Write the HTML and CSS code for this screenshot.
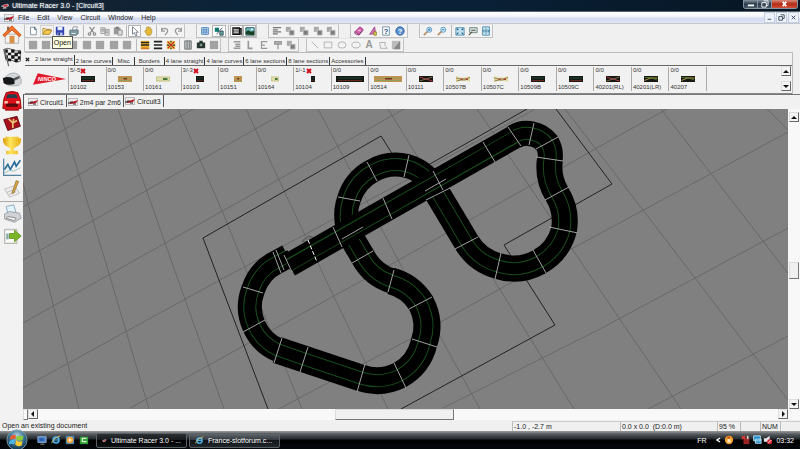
FILE: index.html
```html
<!DOCTYPE html>
<html lang="en">
<head>
<meta charset="utf-8">
<title>Ultimate Racer 3.0 - [Circuit3]</title>
<link rel="stylesheet" href="styles.css">
</head>
<body>
<svg class="defs" aria-hidden="true">
  <defs>
    <linearGradient id="gold" x1="0" x2="1"><stop offset="0" stop-color="#d99a05"/><stop offset=".4" stop-color="#ffe65c"/><stop offset="1" stop-color="#e5ac10"/></linearGradient>
    <radialGradient id="orb" cx=".5" cy=".3" r=".75"><stop offset="0" stop-color="#b8d5e4"/><stop offset=".5" stop-color="#37718f"/><stop offset="1" stop-color="#08243c"/></radialGradient>
    <symbol id="i-app" viewBox="0 0 12 10"><path d="M0 5l4-2 5-1 2 2-3 4-5 1z" fill="#b9a9ad"/><path d="M3 4l5-1 1 2-5 1z" fill="#d32634"/><path d="M1 7h2m4 0h2" stroke="#222" stroke-width="2"/></symbol>
    <symbol id="i-doc" viewBox="0 0 10 8"><rect x=".5" y=".5" width="9" height="7" fill="#eee" stroke="#bbb"/><path d="M1 5l3-1 6-2-2 3-5 1z" fill="#c01525"/><path d="M0 5h3m2 1h3M2 4h3" stroke="#222" stroke-width="1"/></symbol>
    <symbol id="i-new" viewBox="0 0 12 12"><path d="M3 1.500h5l2 2v7H3z" fill="#fff" stroke="#758a9c"/><path d="M8 1v3h2" fill="none" stroke="#345"/></symbol>
    <symbol id="i-open" viewBox="0 0 12 12"><path d="M1 10V3h3l1 1h5v2" fill="#ffe58c" stroke="#a7852d"/><path d="M1 10l3-5h8l-3 5z" fill="#f6cb50" stroke="#a67b25"/></symbol>
    <symbol id="i-save" viewBox="0 0 12 12"><path d="M1 1h10v10H2L1 10z" fill="#3444b0"/><path d="M3 1h6v4H3z" fill="#e5efff"/><path d="M3 8h6v3H3z" fill="#bcc5e5"/><path d="M4 8h2v3H4z" fill="#27348b"/></symbol>
    <symbol id="i-print" viewBox="0 0 12 12"><path d="M4 5l1-4h5L9 5z" fill="#fff" stroke="#889"/><path d="M1 5h10v4l-2 2H1z" fill="#829ba2" stroke="#506d79"/><path d="M3 9h5" stroke="#e4f4e9"/></symbol>
    <symbol id="i-cut" viewBox="0 0 12 12"><g fill="none" stroke="#858585" stroke-width="1.300"><path d="M3 1l5 7M9 1L4 8"/><circle cx="3" cy="9.500" r="1.500"/><circle cx="9" cy="9.500" r="1.500"/></g></symbol>
    <symbol id="i-copy" viewBox="0 0 12 12"><path d="M1 2h5v7H1zM6 4h5v7H6z" fill="#ddd" stroke="#999"/><path d="M2 4h3M2 6h3m2 0h3M7 8h3" stroke="#888"/></symbol>
    <symbol id="i-paste" viewBox="0 0 12 12"><path d="M1 2h8v8H1z" fill="#999"/><path d="M3 1h4v2H3z" fill="#777"/><path d="M6 5h5v6H6z" fill="#ddd" stroke="#888"/></symbol>
    <symbol id="i-pointer" viewBox="0 0 12 12"><path d="M3 1v9l2-2 2 4 1.500-1L7 7.500h3z" fill="#fff" stroke="#66717d"/></symbol>
    <symbol id="i-hand" viewBox="0 0 12 12"><path d="M2 6l1-1 1 1V2h1.500V1H7v1h2v2h1.500v4L9 11H5z" fill="#e5ba37" stroke="#a88428" stroke-width=".700"/></symbol>
    <symbol id="i-undo" viewBox="0 0 12 12"><path d="M2 5c3-4 8-2 7 2-1 2-2 3-3 4M2 2v4h4" fill="none" stroke="#999" stroke-width="1.500"/></symbol>
    <symbol id="i-redo" viewBox="0 0 12 12"><path d="M10 5C7 1 2 3 3 7c1 2 2 3 3 4M10 2v4H6" fill="none" stroke="#999" stroke-width="1.500"/></symbol>
    <symbol id="i-grid" viewBox="0 0 12 12"><path d="M2 2h8v8H2zM2 4.700h8M2 7.300h8M4.700 2v8M7.300 2v8" fill="#e8f4ff" stroke="#3b77b4"/></symbol>
    <symbol id="i-snap" viewBox="0 0 12 12"><path d="M1 2h5v5H1z" fill="#10776e"/><path d="M3 10l7-8M7 6h4v5H7z" fill="#62a79c" stroke="#345"/></symbol>
    <symbol id="i-layers" viewBox="0 0 12 12"><path d="M1 2h8v8H1zM3 3h8v8" fill="#555" stroke="#111" stroke-width="1.300"/><path d="M2 4h6M2 6h6M2 8h6" stroke="#ddd"/></symbol>
    <symbol id="i-image" viewBox="0 0 12 12"><path d="M1 2h10v9H1z" fill="#69b3bd" stroke="#164a52"/><path d="M1 10V7l3-2 3 2 4-1v5z" fill="#183d20"/><path d="M7 3h3v2H7z" fill="#dcf5f2"/></symbol>
    <symbol id="i-lines" viewBox="0 0 12 12"><path d="M1 2h10M1 4.500h6M1 7h10M1 9.500h6" stroke="#777" stroke-width="1.500"/></symbol>
    <symbol id="i-order" viewBox="0 0 12 12"><path d="M1 1h6v6H1z" fill="#aaa"/><path d="M5 5h6v6H5z" fill="#7c7c7c" stroke="#ccc"/></symbol>
    <symbol id="i-book" viewBox="0 0 12 12"><path d="M1 7l6-6 4 3-5 6z" fill="#d763ae" stroke="#94327c"/><path d="M1 7v2l5 2 5-6" fill="none" stroke="#762866"/><path d="M5 5l3 1" stroke="#fff"/></symbol>
    <symbol id="i-picture" viewBox="0 0 12 12"><path d="M2 10l6-9 1 8z" fill="#d96eb1" stroke="#94458a"/><path d="M7 7h3v4H7z" fill="#ded450" stroke="#8d7a28"/></symbol>
    <symbol id="i-question" viewBox="0 0 12 12"><path d="M2 1h8v10H2z" fill="#fff" stroke="#65859e"/><text x="6" y="9" class="mark blue">?</text></symbol>
    <symbol id="i-help" viewBox="0 0 12 12"><circle cx="6" cy="6" r="5" fill="#5791d2" stroke="#285394"/><text x="6" y="9" class="mark white">?</text></symbol>
    <symbol id="i-zoomin" viewBox="0 0 12 12"><path d="M1 11l5-5" stroke="#b78a61" stroke-width="2"/><circle cx="7.500" cy="4.500" r="3" fill="#d5efff" stroke="#4a8cb5"/><path d="M6 4.500h3M7.500 3v3" stroke="#176a9e"/></symbol>
    <symbol id="i-zoomout" viewBox="0 0 12 12"><path d="M1 11l5-5" stroke="#b78a61" stroke-width="2"/><circle cx="7.500" cy="4.500" r="3" fill="#d5efff" stroke="#4a8cb5"/><path d="M6 4.500h3" stroke="#176a9e"/></symbol>
    <symbol id="i-fit" viewBox="0 0 12 12"><path d="M1 2h10v9H1z" fill="#c4e2ef" stroke="#508da9"/><path d="M2 3l2 2m6-2L8 5M2 10l2-2m6 2L8 8" stroke="#1b648c" stroke-width="1.500"/></symbol>
    <symbol id="i-zoomsel" viewBox="0 0 12 12"><path d="M2 2h9v6H2z" fill="#d1dedc" stroke="#637a7d"/><path d="M1 11l4-4M4 5h5" stroke="#625644" stroke-width="1.300"/></symbol>
    <symbol id="i-page" viewBox="0 0 12 12"><path d="M2 1h8v10H2z" fill="#d5eef8" stroke="#397b9e"/><path d="M6 2v8M3 6h7M4 4L2 6l2 2m4-4l2 2-2 2" fill="none" stroke="#397b9e"/></symbol>
    <symbol id="i-square" viewBox="0 0 12 12"><path d="M1 1h10v10H1z" fill="#a2a2a2"/></symbol>
    <symbol id="i-border1" viewBox="0 0 12 12"><path d="M1 1h10v10H1z" fill="#efb62a"/><path d="M1 2h10v2H1zM1 5h10v2H1z" fill="#29251f"/><path d="M1 9h10v2H1z" fill="#cb7725"/></symbol>
    <symbol id="i-border2" viewBox="0 0 12 12"><path d="M1 1h10v2H1zM1 5h10v2H1zM1 9h10v2H1z" fill="#222"/></symbol>
    <symbol id="i-border3" viewBox="0 0 12 12"><path d="M1 1h10v10H1z" fill="#f1ce5f"/><path d="M2 2l8 8m0-8l-8 8" stroke="#bc2315" stroke-width="1.500"/><path d="M1 6h3m4 0h3M6 1v2m0 6v2" stroke="#332" stroke-width="1.500"/></symbol>
    <symbol id="i-cols" viewBox="0 0 12 12"><path d="M2 1h8v10H2zM5 1v10M8 1v10" fill="#bbb" stroke="#6e7476"/></symbol>
    <symbol id="i-camera" viewBox="0 0 12 12"><path d="M1 3h3V1h4v2h3v7H1z" fill="#273b32"/><circle cx="6" cy="6" r="2.500" fill="#7a9b8b" stroke="#111"/></symbol>
    <symbol id="i-al1" viewBox="0 0 12 12"><path d="M2 2h8M4 5h6M4 7.500h6M2 10h8" stroke="#999" stroke-width="1.800"/></symbol>
    <symbol id="i-al2" viewBox="0 0 12 12"><path d="M4 1v9h5" fill="none" stroke="#999" stroke-width="2"/></symbol>
    <symbol id="i-al3" viewBox="0 0 12 12"><path d="M10 2H3v8h7M3 6h4" fill="none" stroke="#999" stroke-width="1.500"/></symbol>
    <symbol id="i-al4" viewBox="0 0 12 12"><path d="M2 2h8v3H2zM6 3v8" fill="#bbb" stroke="#999" stroke-width="1.500"/></symbol>
    <symbol id="i-line" viewBox="0 0 12 12"><path d="M2 2l8 8" stroke="#aaa"/></symbol>
    <symbol id="i-rect" viewBox="0 0 12 12"><path d="M1.500 2.500h9v7h-9z" fill="none" stroke="#aaa"/></symbol>
    <symbol id="i-round" viewBox="0 0 12 12"><rect x="1.500" y="2.500" width="9" height="7" rx="3" fill="none" stroke="#aaa"/></symbol>
    <symbol id="i-ellipse" viewBox="0 0 12 12"><ellipse cx="6" cy="6" rx="5" ry="3.500" fill="none" stroke="#aaa"/></symbol>
    <symbol id="i-letter" viewBox="0 0 12 12"><text x="6" y="10" class="mark letter">A</text></symbol>
    <symbol id="i-poly" viewBox="0 0 12 12"><path d="M2 3h7L8 6l3 4H3z" fill="none" stroke="#aaa"/></symbol>
    <symbol id="i-shade" viewBox="0 0 12 12"><path d="M1 1h10v10H1z" fill="#bbb"/><path d="M11 1v10H3z" fill="#888"/></symbol>
    <symbol id="i-bad" viewBox="0 0 6 6"><path d="M1 1l4 4M5 1L1 5" stroke="#d0101c" stroke-width="2"/></symbol>
    <symbol id="i-dark" viewBox="0 0 28 12" preserveAspectRatio="none"><path d="M0 0h28v12H0z" fill="#151815"/><path d="M2 4h24" stroke="#1d4a2c" stroke-width="2"/><path d="M2 9h24" stroke="#6b281c" stroke-width="2"/></symbol>
    <symbol id="i-cross" viewBox="0 0 28 12" preserveAspectRatio="none"><path d="M0 0h28v12H0z" fill="#15160f"/><path d="M1 2l26 8" stroke="#b23a4a" stroke-width="2"/><path d="M1 10l26-8" stroke="#7a6a46" stroke-width="2"/></symbol>
    <symbol id="i-change" viewBox="0 0 28 12" preserveAspectRatio="none"><path d="M0 0h28v12H0z" fill="#171813"/><path d="M1 9l12-5h14" fill="none" stroke="#b69a3d" stroke-width="2"/><path d="M1 3h13l12 5" fill="none" stroke="#598a3c" stroke-width="1.500"/></symbol>
    <symbol id="i-sand" viewBox="0 0 28 12" preserveAspectRatio="none"><path d="M0 0h28v12H0z" fill="#c89052"/><path d="M1 3l6 2 8-2 12 2M1 9h26" fill="none" stroke="#8fa058" stroke-width="2"/><path d="M11 4h7v3h-7z" fill="#753524"/></symbol>
    <symbol id="i-light" viewBox="0 0 28 12" preserveAspectRatio="none"><path d="M0 1h28v10H0z" fill="#e0dda8"/><path d="M1 2h26v8H1z" fill="none" stroke="#a4aa68"/><path d="M14 4h9v4h-9z" fill="#467540"/></symbol>
    <symbol id="i-narrow" viewBox="0 0 28 12" preserveAspectRatio="none"><path d="M0 0l9 3h10l9-3v12l-9-3H9l-9 3z" fill="#e2dba4"/><path d="M0 4l9 2h10l9-3M1 10l9-2h9" fill="none" stroke="#93834b" stroke-width="2"/><path d="M9 5h4v3H9zM19 5h5v3h-5z" fill="#a5443a"/></symbol>
    <symbol id="s-home" viewBox="0 0 24 24"><path d="M4 11h16v11H4z" fill="#f4f1eb" stroke="#aaa"/><path d="M1 12L12 1l11 11-2 2-9-8-9 8z" fill="#f47427" stroke="#c34b13"/><path d="M6 2h3v5H6z" fill="#aa6340"/><path d="M9 13h6v9H9z" fill="#d89148"/></symbol>
    <symbol id="s-flag" viewBox="0 0 24 24"><path d="M2 3q5-3 10 0t10 1v13q-5 3-10-1T5 16z" fill="#eee" stroke="#444"/><path d="M3 3h4v4H3zm8 0h4v4h-4zm8 2h4v3h-4zM7 7h4v3H7zm8 0h4v4h-4zM4 10h3v4H4zm7 0h4v4h-4zm8 1h3v4h-3zM7 14h4v3H7zm8 0h4v4h-4z" fill="#151515"/><path d="M3 3l5 20" stroke="#666" stroke-width="1.500"/></symbol>
    <symbol id="s-helmet" viewBox="0 0 24 24"><path d="M4 10Q8 4 16 5q8 2 7 12l-3 3H8q-5-2-4-10z" fill="#d3d6d8" stroke="#a5aaac"/><path d="M1 11q7-3 14 1v6q-8 2-13-1z" fill="#15191b"/><path d="M14 11l7-3v3l-6 3z" fill="#555"/></symbol>
    <symbol id="s-car" viewBox="0 0 24 24"><path d="M5 2q7-3 14 0l3 8 1 11h-3v2H4v-2H1l1-11z" fill="#e0101a" stroke="#8d050a"/><path d="M5 9l2-5h10l2 5q-7-2-14 0z" fill="#243e4b"/><path d="M5 15h14v4H5z" fill="#510d10"/><path d="M3 12h4v3H3zm14 0h4v3h-4z" fill="#fac5b5"/></symbol>
    <symbol id="s-tools" viewBox="0 0 24 24"><path d="M2 8l16-4 4 12-15 5z" fill="#a8101c" stroke="#580811"/><path d="M8 7l5 5 1-5m-1 5l5-3m-5 3v6" fill="none" stroke="#e6c171" stroke-width="2"/></symbol>
    <symbol id="s-cup" viewBox="0 0 24 24"><path d="M4 2h16v2h3q0 9-6 10-2 2-3 2v3h5v4H5v-4h5v-3q-1 0-3-2-6-1-6-10h3z" fill="url(#gold)"/></symbol>
    <symbol id="s-chart" viewBox="0 0 24 24"><path d="M2 2v20h21" fill="none" stroke="#5280a2" stroke-width="1.500"/><path d="M3 15l4-6 3 6 5-9 2 5 5-7" fill="none" stroke="#296c9a" stroke-width="2"/><path d="M3 19l6-3 5 1 8-4" fill="none" stroke="#8ab9b6"/></symbol>
    <symbol id="s-pen" viewBox="0 0 24 24"><path d="M3 12l12-4 6 9-12 5z" fill="#ecece8" stroke="#bbb"/><path d="M6 16l10-4m-8 7l9-4" stroke="#b5b5b5"/><path d="M12 17l5-15 3 1-6 14z" fill="#dba645" stroke="#9c7a37"/></symbol>
    <symbol id="s-print" viewBox="0 0 24 24"><path d="M7 11L5 3l9-2 3 10z" fill="#e4f4ff" stroke="#7e9fb4"/><path d="M3 12l6-3 12 2 2 6-8 5-12-4z" fill="#d0d3d6" stroke="#93989d"/><path d="M7 15l10 2-2 3-10-3z" fill="#fff" stroke="#777"/></symbol>
    <symbol id="s-exit" viewBox="0 0 24 24"><path d="M3 4h15v17H3z" fill="#e4e7df" stroke="#abb1a8"/><path d="M5 6h11v13H5z" fill="#fff"/><path d="M5 9h3v7H5z" fill="#8aa"/><path d="M9 9h6V5l8 7-8 7v-4H9z" fill="#79b526" stroke="#62951e"/></symbol>
    <symbol id="i-orb" viewBox="0 0 24 24"><circle cx="12" cy="12" r="11" fill="url(#orb)" stroke="#819eac"/><path d="M5 8q3-2 6-1l-1 4q-3-1-6 1z" fill="#f1592a"/><path d="M12 7q3 2 7 0l-1 5q-4 2-7-1z" fill="#8fcb35"/><path d="M4 13q3-2 6-1l-1 5q-3-2-6 0z" fill="#4db6e9"/><path d="M11 12q3 3 7 1l-1 5q-4 2-7-1z" fill="#fcca31"/></symbol>
    <symbol id="i-desk" viewBox="0 0 12 12"><path d="M1 2h10v7H1z" fill="#4c81c8" stroke="#92b2d6"/><path d="M3 4h5v3H3z" fill="#2858a5"/><path d="M4 11h5" stroke="#aaa"/></symbol>
    <symbol id="i-ie" viewBox="0 0 12 12"><circle cx="6" cy="6" r="3.500" fill="none" stroke="#4cafe9" stroke-width="2"/><path d="M3 6h6" stroke="#4cafe9" stroke-width="1.500"/><path d="M1 10Q1 5 11 1" fill="none" stroke="#e5c95a"/></symbol>
    <symbol id="i-media" viewBox="0 0 12 12"><path d="M1 1h10v10H1z" fill="#4685b7"/><circle cx="6" cy="6" r="4" fill="#f5a936"/><path d="M5 4l3 2-3 2z" fill="#fff"/></symbol>
    <symbol id="i-green" viewBox="0 0 12 12"><path d="M1 2h10v9H1z" fill="#2f9e36"/><path d="M9 4H4v4h5" fill="none" stroke="#dcf4cf" stroke-width="1.500"/></symbol>
    <symbol id="i-norton" viewBox="0 0 12 12"><circle cx="6" cy="6" r="5" fill="#f59b28"/><path d="M4 5h4v4H4z" fill="#ffe9bc"/><path d="M4 3h3" stroke="#b64218" stroke-width="2"/></symbol>
    <symbol id="i-warn" viewBox="0 0 12 12"><path d="M3 4h7v7H3z" fill="#9a2425"/><path d="M1 1l4 4m0-4L1 5" stroke="#f23b36" stroke-width="1.500"/><path d="M8 1v4" stroke="#e9c9c4" stroke-width="2"/></symbol>
    <symbol id="i-net" viewBox="0 0 12 12"><path d="M2 1h8v6H2zM4 5h7v5H4z" fill="#238dc7" stroke="#c9ecfc"/></symbol>
    <symbol id="i-vol" viewBox="0 0 12 12"><path d="M1 4h3l4-3v9L4 8H1z" fill="#e1e2e4"/><circle cx="8" cy="8" r="3" fill="#df2533"/><path d="M6 10l4-4" stroke="#fff"/></symbol>
  </defs>
</svg>

<div class="app">
  <header class="titlebar">
    <svg class="title-icon"><use href="#i-app"/></svg>
    <h1>Ultimate Racer 3.0 - [Circuit3]</h1>
    <div class="window-buttons">
      <button aria-label="Minimize"><svg viewBox="0 0 14 9"><path d="M4 6h7" stroke="#fff" stroke-width="2"/></svg></button>
      <button aria-label="Restore"><svg viewBox="0 0 14 9"><path d="M6 1h5v5H9M4 3h5v5H4z" fill="none" stroke="#fff"/></svg></button>
      <button class="close" aria-label="Close"><svg viewBox="0 0 14 9"><path d="M5 2l4 5m0-5L5 7" stroke="#fff" stroke-width="2"/></svg></button>
    </div>
  </header>

  <nav class="menubar" aria-label="Menu">
    <svg class="menu-icon"><use href="#i-doc"/></svg>
    <button>File</button><button>Edit</button><button>View</button><button>Circuit</button><button>Window</button><button>Help</button>
    <div class="mdi-buttons">
      <button aria-label="Minimize document"><svg viewBox="0 0 10 10"><path d="M3 7h4" stroke="#345" stroke-width="1"/></svg></button>
      <button aria-label="Restore document"><svg viewBox="0 0 10 10"><path d="M4 2h4v4H6M2 4h4v4H2z" fill="none" stroke="#345"/></svg></button>
      <button aria-label="Close document"><svg viewBox="0 0 10 10"><path d="M3 3l4 4m0-4L3 7" stroke="#345"/></svg></button>
    </div>
  </nav>

  <div class="body">
    <nav class="sidebar" aria-label="Shortcuts">
      <button aria-label="Home"><svg><use href="#s-home"/></svg></button>
      <button aria-label="Race"><svg><use href="#s-flag"/></svg></button>
      <button aria-label="Drivers"><svg><use href="#s-helmet"/></svg></button>
      <button aria-label="Cars"><svg><use href="#s-car"/></svg></button>
      <button aria-label="Tuning"><svg><use href="#s-tools"/></svg></button>
      <button aria-label="Championship"><svg><use href="#s-cup"/></svg></button>
      <button aria-label="Statistics"><svg><use href="#s-chart"/></svg></button>
      <button aria-label="Notes"><svg><use href="#s-pen"/></svg></button>
      <hr>
      <button aria-label="Print"><svg><use href="#s-print"/></svg></button>
      <button aria-label="Exit"><svg><use href="#s-exit"/></svg></button>
    </nav>

    <main class="work">
      <div class="toolbars">
        <div class="toolrow">
          <div class="bar">
            <div class="group n4">
              <button aria-label="New"><svg><use href="#i-new"/></svg></button>
              <button class="hot" aria-label="Open"><svg><use href="#i-open"/></svg><span class="tooltip" role="tooltip">Open</span></button>
              <button aria-label="Save"><svg><use href="#i-save"/></svg></button>
              <button aria-label="Print page"><svg><use href="#i-print"/></svg></button>
            </div>
            <div class="group n3">
              <button aria-label="Cut"><svg><use href="#i-cut"/></svg></button>
              <button aria-label="Copy"><svg><use href="#i-copy"/></svg></button>
              <button aria-label="Paste"><svg><use href="#i-paste"/></svg></button>
            </div>
            <div class="group n2">
              <button class="pressed" aria-label="Select"><svg><use href="#i-pointer"/></svg></button>
              <button aria-label="Pan"><svg><use href="#i-hand"/></svg></button>
            </div>
            <div class="group n2">
              <button aria-label="Undo"><svg><use href="#i-undo"/></svg></button>
              <button aria-label="Redo"><svg><use href="#i-redo"/></svg></button>
            </div>
          </div>
          <div class="bar">
            <div class="group n2">
              <button aria-label="Grid"><svg><use href="#i-grid"/></svg></button>
              <button class="pressed" aria-label="Snap"><svg><use href="#i-snap"/></svg></button>
            </div>
            <div class="group n2">
              <button class="pressed" aria-label="Layers"><svg><use href="#i-layers"/></svg></button>
              <button class="pressed" aria-label="Scenery"><svg><use href="#i-image"/></svg></button>
            </div>
          </div>
          <div class="bar">
            <div class="group n5">
              <button aria-label="Align"><svg><use href="#i-lines"/></svg></button>
              <button aria-label="To front"><svg><use href="#i-order"/></svg></button>
              <button aria-label="To back"><svg><use href="#i-order"/></svg></button>
              <button aria-label="Forward"><svg><use href="#i-order"/></svg></button>
              <button aria-label="Backward"><svg><use href="#i-order"/></svg></button>
            </div>
          </div>
          <div class="bar">
            <div class="group n4">
              <button aria-label="Manual"><svg><use href="#i-book"/></svg></button>
              <button aria-label="Tutorial"><svg><use href="#i-picture"/></svg></button>
              <button aria-label="Help topics"><svg><use href="#i-question"/></svg></button>
              <button aria-label="About"><svg><use href="#i-help"/></svg></button>
            </div>
          </div>
          <div class="bar">
            <div class="group n2">
              <button aria-label="Zoom in"><svg><use href="#i-zoomin"/></svg></button>
              <button aria-label="Zoom out"><svg><use href="#i-zoomout"/></svg></button>
            </div>
            <div class="group n3">
              <button aria-label="Fit"><svg><use href="#i-fit"/></svg></button>
              <button aria-label="Zoom selection"><svg><use href="#i-zoomsel"/></svg></button>
              <button aria-label="Whole page"><svg><use href="#i-page"/></svg></button>
            </div>
          </div>
        </div>
        <div class="toolrow close-set">
          <div class="bar">
            <div class="group n8">
              <button aria-label="Tool 1"><svg><use href="#i-square"/></svg></button><button aria-label="Tool 2"><svg><use href="#i-square"/></svg></button><button aria-label="Tool 3"><svg><use href="#i-square"/></svg></button><button aria-label="Tool 4"><svg><use href="#i-square"/></svg></button><button aria-label="Tool 5"><svg><use href="#i-square"/></svg></button><button aria-label="Tool 6"><svg><use href="#i-square"/></svg></button><button aria-label="Tool 7"><svg><use href="#i-square"/></svg></button><button aria-label="Tool 8"><svg><use href="#i-square"/></svg></button>
            </div>
            <div class="group n3">
              <button aria-label="Border 1"><svg><use href="#i-border1"/></svg></button>
              <button aria-label="Border 2"><svg><use href="#i-border2"/></svg></button>
              <button aria-label="Border 3"><svg><use href="#i-border3"/></svg></button>
            </div>
            <div class="group n3">
              <button aria-label="Columns"><svg><use href="#i-cols"/></svg></button>
              <button aria-label="Camera"><svg><use href="#i-camera"/></svg></button>
              <button aria-label="Fill"><svg><use href="#i-square"/></svg></button>
            </div>
          </div>
          <div class="bar">
            <div class="group n5">
              <button aria-label="Align left"><svg><use href="#i-al1"/></svg></button>
              <button aria-label="Align bottom"><svg><use href="#i-al2"/></svg></button>
              <button aria-label="Align right"><svg><use href="#i-al3"/></svg></button>
              <button aria-label="Align top"><svg><use href="#i-al4"/></svg></button>
              <button aria-label="Group"><svg><use href="#i-order"/></svg></button>
            </div>
          </div>
          <div class="bar">
            <div class="group n7">
              <button aria-label="Line"><svg><use href="#i-line"/></svg></button>
              <button aria-label="Rectangle"><svg><use href="#i-rect"/></svg></button>
              <button aria-label="Rounded rectangle"><svg><use href="#i-round"/></svg></button>
              <button aria-label="Ellipse"><svg><use href="#i-ellipse"/></svg></button>
              <button aria-label="Text"><svg><use href="#i-letter"/></svg></button>
              <button aria-label="Polygon"><svg><use href="#i-poly"/></svg></button>
              <button aria-label="Shade"><svg><use href="#i-shade"/></svg></button>
            </div>
          </div>
        </div>
      </div>

      <section class="palette" aria-label="Track pieces">
        <div class="palette-tabs" role="tablist">
          <button class="palette-close" aria-label="Close palette"><svg viewBox="0 0 6 6"><path d="M1 1l4 4m0-4L1 5" stroke="#111" stroke-width="1.500"/></svg></button>
          <button role="tab" aria-selected="true" class="active">2 lane straight</button><button role="tab">2 lane curves</button><button role="tab" class="short">Misc</button><button role="tab" class="short">Borders</button><button role="tab">4 lane straight</button><button role="tab">4 lane curves</button><button role="tab">6 lane sections</button><button role="tab">8 lane sections</button><button role="tab">Accessories</button>
        </div>
        <div class="palette-items">
          <svg class="brand" viewBox="0 0 36 14"><path d="M5 1l30 6L0 13z" fill="#e01b2b"/><text x="5" y="9">NINCO</text></svg>
          <ul class="pieces">
            <li><span>5/-5<svg class="bad"><use href="#i-bad"/></svg></span><svg class="p14"><use href="#i-dark"/></svg><span>10102</span></li>
            <li><span>0/0</span><svg class="p14"><use href="#i-sand"/></svg><span>10153</span></li>
            <li><span>0/0</span><svg class="p14"><use href="#i-light"/></svg><span>10161</span></li>
            <li><span>3/-3<svg class="bad"><use href="#i-bad"/></svg></span><svg class="p8"><use href="#i-dark"/></svg><span>10103</span></li>
            <li><span>0/0</span><svg class="p8"><use href="#i-sand"/></svg><span>10151</span></li>
            <li><span>0/0</span><svg class="p8"><use href="#i-light"/></svg><span>10164</span></li>
            <li><span>1/-1<svg class="bad"><use href="#i-bad"/></svg></span><svg class="p4"><use href="#i-dark"/></svg><span>10104</span></li>
            <li><span>0/0</span><svg class="p28"><use href="#i-dark"/></svg><span>10109</span></li>
            <li><span>0/0</span><svg class="p28"><use href="#i-sand"/></svg><span>10514</span></li>
            <li><span>0/0</span><svg class="p14"><use href="#i-cross"/></svg><span>10111</span></li>
            <li><span>0/0</span><svg class="p14"><use href="#i-narrow"/></svg><span>10507B</span></li>
            <li><span>0/0</span><svg class="p14"><use href="#i-narrow"/></svg><span>10507C</span></li>
            <li><span>0/0</span><svg class="p14"><use href="#i-dark"/></svg><span>10509B</span></li>
            <li><span>0/0</span><svg class="p14"><use href="#i-dark"/></svg><span>10509C</span></li>
            <li><span>0/0</span><svg class="p14"><use href="#i-cross"/></svg><span>40201(RL)</span></li>
            <li><span>0/0</span><svg class="p14"><use href="#i-change"/></svg><span>40201(LR)</span></li>
            <li><span>0/0</span><svg class="p14"><use href="#i-change"/></svg><span>40207</span></li>
          </ul>
          <div class="palette-scroll">
            <button class="arrow" aria-label="Previous pieces"><svg viewBox="0 0 8 8"><path d="M1 6h6L4 3z"/></svg></button>
            <button class="arrow" aria-label="More pieces"><svg viewBox="0 0 8 8"><path d="M1 3h6L4 6z"/></svg></button>
          </div>
        </div>
      </section>

      <div class="doc-tabs" role="tablist">
        <button role="tab"><svg><use href="#i-doc"/></svg>Circuit1</button>
        <button role="tab"><svg><use href="#i-doc"/></svg>2m4 par 2m6</button>
        <button role="tab" aria-selected="true" class="active"><svg><use href="#i-doc"/></svg>Circuit3</button>
      </div>

      <div class="view">
        <svg class="canvas" viewBox="23 109 765 300" preserveAspectRatio="xMidYMid slice" role="img" aria-label="Circuit3 track layout">
          <g class="floor">
            <path d="M23 153L100 109M23 207L200 105M23 260L291 109M23 323L404 109M23 388L220 280L401 183L535 109M130 408L200 370L390 265L620 135L667 109M275 411L412 338L575 247L790 131M443 408L600 329L790 227M648 409L790 335"/>
            <path d="M23 183L42 260L79 409M59 109L105 260L149 409M118 109L171 260L224 409M178 109L223 213L302 409M246 109L279 180L333 295L388 409M318 109L397 258L480 409M388 109L574 409M477 109L600 290L681 409M565 109L666 240L788 400M661 109L790 276M767 109L790 132"/>
          </g>
          <path class="table" d="M268 409L203 238L381 136L407 177L527 109M556 109L612 184L504 245L555 325L401 409"/>
          <path d="M302 241l7-5 5 2-7 5z" fill="#777" stroke="#555"/>
          <g class="track">
            <path stroke-width="24" d="M288 256L277 262A47 47 0 0 0 253 290A47 47 0 0 0 254 326A47 47 0 0 0 278 350"/>
            <path stroke-width="27" d="M277 350L304 359L361 378A51 51 0 0 0 400 375A50 50 0 0 0 424 343A50 50 0 0 0 421 303A50 50 0 0 0 391 281"/>
            <path stroke-width="25" d="M392 281A50 50 0 0 1 363 257L353 240"/>
            <path stroke-width="24" d="M358 249L354 242A49 49 0 0 1 349 199A48 48 0 0 1 372 171A47 47 0 0 1 407 166A47 47 0 0 1 438 194L443 203"/>
            <path stroke-width="26" d="M433 186L467 243A52 52 0 0 0 498 266A52 52 0 0 0 539 262A52 52 0 0 0 564 230A52 52 0 0 0 557 194A52 52 0 0 1 550 159"/>
            <path stroke-width="25" d="M550 160A25 25 0 0 0 547 143A24 24 0 0 0 532 134A24 24 0 0 0 514 137"/>
            <path class="lane" d="M288 256L277 262A47 47 0 0 0 253 290A47 47 0 0 0 254 326A47 47 0 0 0 278 350L304 359L361 378A51 51 0 0 0 400 375A50 50 0 0 0 424 343A50 50 0 0 0 421 303A50 50 0 0 0 391 281A50 50 0 0 1 363 257L354 242A49 49 0 0 1 349 199A48 48 0 0 1 372 171A47 47 0 0 1 407 166A47 47 0 0 1 438 194L467 243A52 52 0 0 0 498 266A52 52 0 0 0 539 262A52 52 0 0 0 564 230A52 52 0 0 0 557 194A52 52 0 0 1 550 159A25 25 0 0 0 547 143A24 24 0 0 0 532 134A24 24 0 0 0 514 137"/>
            <path class="core" d="M290 255L277 262A47 47 0 0 0 253 290A47 47 0 0 0 254 326A47 47 0 0 0 278 350L304 359L361 378A51 51 0 0 0 400 375A50 50 0 0 0 424 343A50 50 0 0 0 421 303A50 50 0 0 0 391 281A50 50 0 0 1 363 257L354 242A49 49 0 0 1 349 199A48 48 0 0 1 372 171A47 47 0 0 1 407 166A47 47 0 0 1 438 194L467 243A52 52 0 0 0 498 266A52 52 0 0 0 539 262A52 52 0 0 0 564 230A52 52 0 0 0 557 194A52 52 0 0 1 550 159A25 25 0 0 0 547 143A24 24 0 0 0 532 134A24 24 0 0 0 514 137"/>
            <path d="M289 265L516 136" stroke-width="24"/>
            <path class="lane" d="M289 265L515 137"/>
            <path class="core" d="M288 266L516 136"/>
          </g>
          <path class="joints" d="M273 252l8 21M276 250l8 20M243 287l20 6M243 332l22-12M274 363l8-25M300 372l8-25M357 392l8-28M406 388l-12-25M437 347l-25-8M432 297l-23 12M394 270l-6 22M373 251l-21 12M338 197l22 4M367 162l10 19M409 155l-5 22M426 200l24-12M455 249l23-12M495 279l6-26M546 273l-13-23M578 233l-29-6M569 187l-24 13M563 161l-27-4M558 137l-22 12M534 123l-5 22M508 127l13 19M483 142l12 20M383 198l9 21M333 227l9 20M284 255l8 17M342 239l21-12M425 191l21-12M433 171l10 19"/>
          <path class="start" d="M308 240l9 22"/>
        </svg>
        <div class="vscroll">
          <button class="arrow" aria-label="Scroll up"><svg viewBox="0 0 8 8"><path d="M1 6h6L4 3z"/></svg></button>
          <span class="before"></span><span class="thumb"></span><span class="after"></span>
          <button class="arrow" aria-label="Scroll down"><svg viewBox="0 0 8 8"><path d="M1 3h6L4 6z"/></svg></button>
        </div>
        <div class="hscroll">
          <span class="split"></span>
          <button class="arrow" aria-label="Scroll left"><svg viewBox="0 0 8 8"><path d="M5 1v6L2 4z"/></svg></button>
          <span class="before"></span><span class="thumb"></span><span class="after"></span>
          <button class="arrow" aria-label="Scroll right"><svg viewBox="0 0 8 8"><path d="M3 1v6l3-3z"/></svg></button>
        </div>
      </div>
    </main>
  </div>

  <footer class="status">
    <span class="message">Open an existing document</span>
    <span class="panel wide">-1.0 , -2.7 m</span>
    <span class="panel medium">0.0 x 0.0&nbsp; (D:0.0 m)</span>
    <span class="panel small">95 %</span>
    <span class="panel tiny"></span>
    <span class="panel tiny">NUM</span>
    <span class="panel tiny"></span>
  </footer>

  <div class="taskbar">
    <button class="orb" aria-label="Start"><svg><use href="#i-orb"/></svg></button>
    <div class="quick">
      <button aria-label="Desktop"><svg><use href="#i-desk"/></svg></button>
      <button aria-label="Internet Explorer"><svg><use href="#i-ie"/></svg></button>
      <button aria-label="Media Player"><svg><use href="#i-media"/></svg></button>
      <button aria-label="Camtasia"><svg><use href="#i-green"/></svg></button>
    </div>
    <button class="task current"><svg><use href="#i-app"/></svg>Ultimate Racer 3.0 - ...</button>
    <button class="task"><svg><use href="#i-ie"/></svg>France-slotforum.c...</button>
    <div class="tray">
      <span class="lang">FR</span>
      <svg class="chevron" viewBox="0 0 6 10"><path d="M5 3L2 5l3 2" fill="none" stroke="#fff" stroke-width="1.500"/></svg>
      <svg class="tray-main"><use href="#i-norton"/></svg>
      <svg><use href="#i-warn"/></svg><svg><use href="#i-net"/></svg><svg><use href="#i-vol"/></svg>
      <time>03:32</time>
    </div>
  </div>
</div>
</body>
</html>
```
FILE: styles.css
```css
* { box-sizing: border-box; }
html, body { margin: 0; height: 100%; }
body { font: 7px/9px "Liberation Sans", Arial, sans-serif; color: #222; background: #f0f0f0; overflow: hidden; }
button { margin: 0; padding: 0; border: 0; background: none; font: inherit; color: inherit; }
svg { display: block; }
.defs { position: absolute; width: 0; height: 0; }
.mark { font: bold 9px "Liberation Sans", Arial, sans-serif; text-anchor: middle; }
.blue { fill: #253e86; }
.white { fill: #fff; }
.letter { fill: #999; font-size: 12px; }
.app { display: flex; flex-direction: column; height: 100vh; }

.titlebar { display: flex; align-items: center; height: 12px; padding-left: 1px; background: linear-gradient(90deg, #17222f, #0b2338 30%, #0a2036 60%, #061522); border-bottom: 1px solid #59646f; }
.title-icon { width: 9px; height: 8px; margin-right: 2px; }
.titlebar h1 { flex: 1; margin: 0; font: 7px/10px "Liberation Sans", Arial, sans-serif; color: #fff; text-shadow: 0 0 2px #9ab; }
.window-buttons { display: flex; align-self: flex-start; margin-right: 2px; border: 1px solid #8894a0; border-top: 0; border-radius: 0 0 3px 3px; overflow: hidden; }
.window-buttons button { width: 14px; height: 8px; background: linear-gradient(#8a96a1, #28394a 50%, #4c5c6b); border-right: 1px solid #8894a0; }
.window-buttons svg { width: 100%; height: 8px; }
.window-buttons .close { width: 25px; border-right: 0; background: linear-gradient(#d98c7c, #b22b16 50%, #d0503a); }

.menubar { display: flex; align-items: center; height: 12px; padding: 0 1px 0 4px; background: linear-gradient(#fff, #f4f6fc 40%, #d5dbef 60%, #dfe5f5); border-bottom: 1px solid #c5c8d0; }
.menu-icon { width: 10px; height: 8px; }
.menubar > button { padding: 0 4px; }
.mdi-buttons { display: flex; gap: 1px; margin-left: auto; }
.mdi-buttons button { width: 11px; height: 11px; background: #eef3fb; border: 1px solid #c4cfdf; }
.mdi-buttons svg { width: 9px; height: 9px; }

.body { display: flex; flex: 1; min-height: 0; }
.sidebar { width: 23px; background: #f2f2f2; }
.sidebar button { display: flex; align-items: center; justify-content: center; width: 23px; height: 22px; }
.sidebar svg { width: 20px; height: 20px; }
.sidebar hr { margin: 1px 0; border: 0; border-top: 1px solid #aaa; }
.work { display: flex; flex: 1; flex-direction: column; min-width: 0; }

.toolbars { padding-left: 1px; }
.toolrow { display: flex; gap: 11px; height: 14px; }
.close-set { gap: 7px; }
.bar { display: flex; gap: 2px; padding-left: 1px; border: 1px solid #c2c2c2; border-top-color: #e6e6e6; background: #f3f3f3; }
.group { display: flex; }
.group + .group { border-left: 1px solid #bbb; padding-left: 1px; }
.group button { display: flex; flex: 1; align-items: center; justify-content: center; position: relative; height: 12px; }
.group svg { width: 10px; height: 10px; }
.n2 { width: 28px; }
.n3 { width: 41px; }
.n4 { width: 55px; }
.n5 { width: 68px; }
.n7 { width: 95px; }
.n8 { width: 108px; }
.group .pressed { background: #fff; box-shadow: inset 0 0 0 1px #b5b5b5; }
.group .hot { box-shadow: inset 0 0 0 1px #d5d5d5; }
.tooltip { position: absolute; z-index: 2; left: 12px; top: 11px; padding: 0 1px; border: 1px solid #555; background: #ffffe1; line-height: 11px; color: #111; }

.palette { margin: 0 7px 0 2px; border-top: 1px solid #bbb; border-right: 1px solid #bbb; background: #f1f1f1; }
.palette-tabs { display: flex; align-items: flex-end; height: 12px; font-size: 6px; line-height: 7px; color: #333; }
.palette-close { align-self: center; width: 9px; height: 6px; }
.palette-close svg { width: 5px; height: 5px; }
.palette-tabs [role="tab"] { height: 8px; padding: 0 1px; border-right: 1px solid #333; white-space: nowrap; }
.palette-tabs .short { padding: 0 4px; }
.palette-tabs .active { height: 10px; padding: 0 1px 2px; }
.palette-items { display: flex; height: 29px; padding-right: 1px; border-top: 1px solid #666; border-bottom: 1px solid #888; }
.brand { width: 34px; height: 14px; margin: 6px 0 0 8px; }
.brand text { font: italic bold 6px "Liberation Sans", Arial, sans-serif; fill: #fff; }
.pieces { display: grid; flex: 1; grid-template-columns: repeat(17, 1fr); margin: 1px 0 2px 1px; padding: 0; list-style: none; border-right: 1px solid #aaa; font-size: 6px; line-height: 7px; color: #333; }
.pieces li { display: flex; flex-direction: column; justify-content: space-between; min-width: 0; padding-left: 1px; border-left: 1px solid #aaa; }
.pieces span { display: flex; align-items: center; height: 7px; white-space: nowrap; }
.pieces li > svg { align-self: center; height: 6px; }
.pieces .bad { width: 6px; height: 6px; }
.p4 { width: 4px; }
.p8 { width: 8px; }
.p14 { width: 14px; }
.p28 { width: 28px; }
.palette-scroll { display: flex; flex-direction: column; justify-content: space-between; width: 84px; align-items: flex-end; padding-bottom: 2px; }

.arrow { display: block; flex: none; width: 10px; height: 10px; background: #f3f3f3; border: 1px solid #ddd; border-right-color: #666; border-bottom-color: #666; }
.arrow svg { width: 8px; height: 8px; fill: #111; }

.doc-tabs { display: flex; align-items: flex-start; height: 15px; padding: 0 0 0 3px; border-top: 1px solid #777; border-left: 1px solid #555; background: #f1f1f1; }
.doc-tabs button { display: flex; align-items: center; gap: 2px; height: 12px; padding: 2px 2px 0 1px; border-right: 1px solid #555; }
.doc-tabs .active { padding-top: 0; }
.doc-tabs svg { width: 10px; height: 8px; }

.view { display: grid; flex: 1; grid-template: minmax(0, 1fr) 11px / minmax(0, 1fr) 12px; min-height: 0; background: #f8f8f8; }
.canvas { width: 100%; height: 100%; background: #808080; }
.floor { fill: none; stroke: #686868; stroke-width: 1; }
.table { fill: none; stroke: #222; stroke-width: 1; }
.track { fill: none; stroke: #000; }
.lane { stroke: #164d19; stroke-width: 13; }
.core { stroke: #000; stroke-width: 11; }
.joints { stroke: #a0a0a0; stroke-width: 1; }
.start { stroke: #fff; stroke-width: 1; stroke-dasharray: 4 2; }
.vscroll { display: flex; flex-direction: column; padding: 3px 1px 0; }
.vscroll .before { flex: 141; }
.vscroll .after { flex: 120; }
.vscroll .thumb { height: 17px; }
.thumb { background: #f0f0f0; border: 1px solid #ddd; border-right-color: #777; border-bottom-color: #777; }
.hscroll { display: flex; }
.hscroll .split { width: 5px; border: 1px solid #777; border-left-color: #ddd; border-top-color: #ddd; }
.hscroll .before { flex: 299; }
.hscroll .thumb { flex: 117; }
.hscroll .after { flex: 326; }

.status { display: flex; align-items: center; height: 11px; padding-left: 2px; background: #f0f0f0; white-space: nowrap; }
.message { flex: 1; }
.panel { height: 10px; padding-left: 1px; border-left: 1px solid #bbb; border-top: 1px solid #ccc; }
.wide { width: 108px; }
.medium { width: 97px; }
.small { width: 23px; }
.tiny { width: 20px; }

.taskbar { display: flex; align-items: center; height: 18px; padding-right: 6px; background: linear-gradient(#999 0, #50555a 20%, #22272b 45%, #000 50%, #05080b); color: #fff; }
.orb { width: 24px; margin-left: 5px; }
.orb svg { width: 24px; height: 22px; }
.quick { display: flex; gap: 4px; margin: 0 5px 0 8px; }
.quick svg { width: 10px; height: 10px; }
.task { display: flex; align-items: center; gap: 4px; width: 91px; height: 15px; margin-left: 2px; padding: 0 5px; border: 1px solid #596066; border-radius: 2px; background: linear-gradient(#5f666c, #31373c 48%, #111518 50%, #22272b); white-space: nowrap; }
.current { background: linear-gradient(#2c3033, #17191b 48%, #000 50%, #101214); }
.task svg { width: 9px; height: 9px; }
.tray { display: flex; align-items: center; gap: 1px; margin-left: auto; }
.tray svg { width: 10px; height: 10px; }
.tray .lang { margin-right: 8px; }
.tray .chevron { width: 6px; }
.tray .tray-main { margin: 0 6px 0 2px; }
.tray time { margin-left: 2px; }
```
